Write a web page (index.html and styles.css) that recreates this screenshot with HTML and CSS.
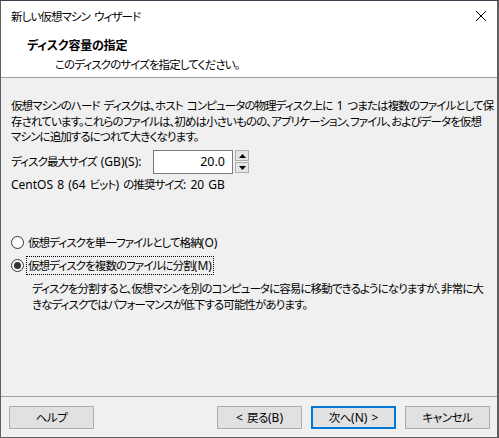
FILE: index.html
```html
<!DOCTYPE html>
<html lang="ja">
<head>
  <meta charset="UTF-8" />
  <title>新しい仮想マシン ウィザード</title>
  <link rel="stylesheet" href="styles.css">
</head>
<body>

<div class="window">
  <div class="titlebar">
    <span class="title">新しい仮想マシン ウィザード</span>
    <svg class="close" width="12" height="12" viewBox="0 0 12 12">
      <path d="M1 1 L11 11 M11 1 L1 11" stroke="#000" stroke-width="1" fill="none" />
    </svg>
  </div>

  <div class="header">
    <div class="head-title">ディスク容量の指定</div>
    <div class="head-sub">このディスクのサイズを指定してください。</div>
  </div>

  <div class="content">
    <p class="intro">仮想マシンのハード ディスクは、ホスト コンピュータの物理ディスク上に <span class="en">1</span> つまたは複数のファイルとして保<br>存されています。これらのファイルは、初めは小さいものの、アプリケーション、ファイル、およびデータを仮想<br>マシンに追加するにつれて大きくなります。</p>

    <div class="size-row">
      <label class="size-label">ディスク最大サイズ <span class="en">(GB)(S):</span></label>
      <div class="spin">
        <div class="spin-input">20.0</div>
        <div class="spin-btns">
          <div class="spin-btn"><svg width="7" height="4" viewBox="0 0 7 4"><path d="M0 4 L3.5 0 L7 4 Z" fill="#000"/></svg></div>
          <div class="spin-btn"><svg width="7" height="4" viewBox="0 0 7 4"><path d="M0 0 L3.5 4 L7 0 Z" fill="#000"/></svg></div>
        </div>
      </div>
    </div>

    <div class="recommend"><span class="en">CentOS 8 (64 </span>ビット<span class="en">) </span>の推奨サイズ<span class="en">: 20 GB</span></div>

    <div class="options">
      <div class="radio-row">
        <span class="radio"></span>
        <span class="radio-text">仮想ディスクを単一ファイルとして格納<span class="en">(O)</span></span>
      </div>
      <div class="radio-row">
        <span class="radio checked"></span>
        <span class="radio-text focused">仮想ディスクを複数のファイルに分割<span class="en">(M)</span></span>
      </div>
      <p class="note">ディスクを分割すると、仮想マシンを別のコンピュータに容易に移動できるようになりますが、非常に大<br>きなディスクではパフォーマンスが低下する可能性があります。</p>
    </div>
  </div>

  <div class="footer">
    <button class="btn">ヘルプ</button>
    <div class="btn-group">
      <button class="btn"><span class="en">&lt; </span>戻る<span class="en">(B)</span></button>
      <button class="btn default">次へ<span class="en">(N) &gt;</span></button>
      <button class="btn">キャンセル</button>
    </div>
  </div>
</div>

</body>
</html>
```

FILE: styles.css
```css
* {
  box-sizing: border-box;
}
body {
  margin: 0;
  background: #2b2b2b;
  font-family: "Noto Sans", "Noto Sans CJK JP", sans-serif;
  font-size: 11.5px;
  letter-spacing: -0.9px;
  word-spacing: 2px;
  font-feature-settings: "palt";
  color: #000;
}
.en {
  letter-spacing: 0;
  word-spacing: 1px;
  font-size: 12px;
}

/* ウィンドウ枠 */
.window {
  width: 499px;
  height: 438px;
  background: #f0f0f0;
  border-left: 1px solid #5f5f5f;
  border-right: 2px solid #5f5f5f;
  border-bottom: 1px solid #5f5f5f;
  border-top: 1px solid #3a4250;
  display: flex;
  flex-direction: column;
}

/* タイトルバー */
.titlebar {
  height: 29px;
  background: #fff;
  display: flex;
  align-items: center;
  justify-content: space-between;
  padding: 0 10px 0 10px;
}
.close {
  margin-top: 1px;
}

/* ヘッダー */
.header {
  background: #fff;
  height: 48px;
  padding-top: 6px;
  border-bottom: 1px solid #a0a0a0;
}
.head-title {
  font-weight: bold;
  font-size: 12px;
  letter-spacing: -0.2px;
  padding-left: 26px;
  line-height: 20px;
}
.head-sub {
  padding-left: 54px;
  line-height: 18px;
}

/* 本文 */
.content {
  flex: 1;
  padding: 20px 10px 0 10px;
  border-bottom: 1px solid #a0a0a0;
}
.intro {
  margin: 0;
  line-height: 15.5px;
  white-space: nowrap;
}
.size-row {
  display: flex;
  align-items: center;
  margin-top: 5px;
  white-space: nowrap;
}
.size-label {
  width: 142px;
}
.spin {
  display: flex;
  align-items: center;
  gap: 2px;
}
.spin-input {
  width: 80px;
  height: 24px;
  background: #fff;
  border: 1px solid #7a7a7a;
  text-align: right;
  padding-right: 7px;
  line-height: 21px;
  font-size: 12.5px;
  letter-spacing: 0;
}
.spin-btns {
  display: flex;
  flex-direction: column;
  gap: 1px;
}
.spin-btn {
  width: 14px;
  height: 11px;
  background: #e5e5e5;
  border: 1px solid #adadad;
  display: flex;
  align-items: center;
  justify-content: center;
}
.spin-btn svg {
  display: block;
}
.recommend {
  margin-top: 3px;
  line-height: 16px;
}

/* オプション */
.options {
  margin-top: 38px;
}
.radio-row {
  display: flex;
  align-items: center;
  height: 23px;
}
.radio {
  width: 13px;
  height: 13px;
  border: 1px solid #333;
  border-radius: 50%;
  background: #fff;
  margin-right: 2px;
  display: flex;
  align-items: center;
  justify-content: center;
}
.radio.checked::after {
  content: "";
  width: 7px;
  height: 7px;
  border-radius: 50%;
  background: #333;
}
.radio-text {
  padding: 1px 1px;
  border: 1px solid transparent;
  line-height: 15px;
}
.radio-text.focused {
  border: 1px dotted #000;
}
.note {
  margin: 4px 0 0 21px;
  line-height: 16px;
  white-space: nowrap;
}

/* フッター */
.footer {
  height: 40px;
  display: flex;
  align-items: center;
  justify-content: space-between;
  padding: 0 7px 0 8px;
}
.btn-group {
  display: flex;
  gap: 9px;
}
.btn {
  width: 85px;
  height: 23px;
  background: #e1e1e1;
  border: 1px solid #adadad;
  font-family: inherit;
  font-size: 11.5px;
  letter-spacing: -0.4px;
  word-spacing: 1px;
  font-feature-settings: "palt";
  color: #000;
  padding: 0;
}
.btn.default {
  border: 2px solid #0078d7;
}
```
